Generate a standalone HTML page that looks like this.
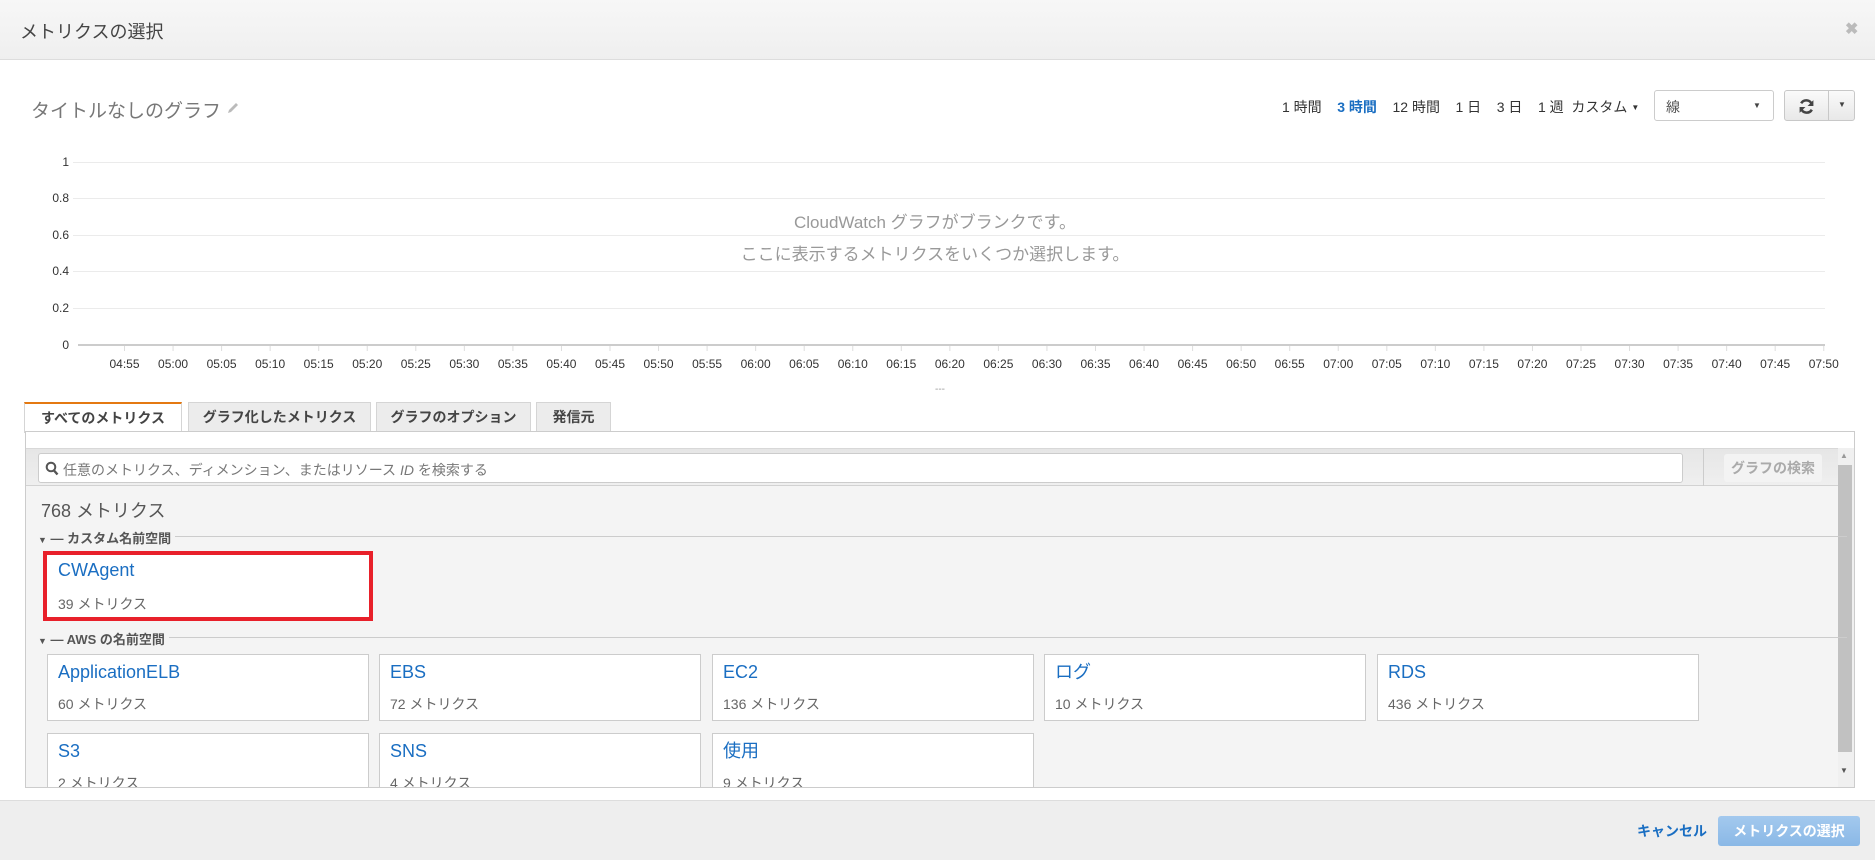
<!DOCTYPE html>
<html><head><meta charset="utf-8"><style>
*{box-sizing:border-box;margin:0;padding:0}
body{width:1875px;height:860px;position:relative;background:#fff;font-family:"Liberation Sans","Noto Sans CJK JP",sans-serif;overflow:hidden;color:#444}
.a{position:absolute;white-space:nowrap}
.hdr{left:0;top:0;width:1875px;height:60px;background:linear-gradient(#f7f7f7,#efefef);border-bottom:1px solid #ddd}
.tab{position:absolute;top:402px;height:30px;background:#ececec;border:1px solid #d5d5d5;border-bottom:none;font-size:14px;font-weight:bold;color:#444;text-align:center;line-height:28px}
.card{position:absolute;width:322px;height:67px;background:#fff;border:1px solid #ccc;overflow:hidden}
.card .t{position:absolute;left:10px;top:6px;font-size:18px;color:#1a6ec2;line-height:22px}
.card .c{position:absolute;left:10px;top:39px;font-size:14px;color:#666}
.sec{position:absolute;left:44px;font-size:13px;font-weight:bold;color:#555;height:16px}
</style></head><body>
<div class="a hdr"></div>
<div class="a" style="left:20px;top:18px;font-size:18px;color:#444">メトリクスの選択</div>
<div class="a" style="left:1845px;top:19px;font-size:16px;color:#bbb;font-weight:bold">✖</div>

<div class="a" style="left:31px;top:96px;font-size:19px;color:#777">タイトルなしのグラフ</div>
<svg class="a" style="left:226px;top:101px" width="14" height="14" viewBox="0 0 14 14"><path d="M2 12 L3 9 L10 2 L12 4 L5 11 Z" fill="#bbb"/></svg>

<div class="a" style="left:1282px;top:97px;font-size:14px;color:#333">1 時間&nbsp;&nbsp;&nbsp; <b style="color:#1a6ec2">3 時間</b>&nbsp;&nbsp;&nbsp; 12 時間&nbsp;&nbsp;&nbsp; 1 日&nbsp;&nbsp;&nbsp; 3 日&nbsp;&nbsp;&nbsp; 1 週&nbsp; カスタム <span style="font-size:8px;vertical-align:2px">▼</span></div>
<div class="a" style="left:1654px;top:90px;width:120px;height:31px;border:1px solid #ccc;border-radius:3px;background:#fff"><span class="a" style="left:11px;top:6px;font-size:14px;color:#555">線</span><span class="a" style="left:98px;top:10px;font-size:8px;color:#444">▼</span></div>
<div class="a" style="left:1784px;top:90px;width:71px;height:31px;border:1px solid #c8c8c8;border-radius:3px;background:linear-gradient(#fafafa,#e8e8e8)">
<svg class="a" style="left:13px;top:7px" width="17" height="17" viewBox="0 0 16 16"><path d="M13 6 A5.5 5.5 0 0 0 3 5" stroke="#444" stroke-width="2.4" fill="none"/><path d="M14.5 2 L14.5 7.5 L9 7.5 Z" fill="#444"/><path d="M3 10 A5.5 5.5 0 0 0 13 11" stroke="#444" stroke-width="2.4" fill="none"/><path d="M1.5 14 L1.5 8.5 L7 8.5 Z" fill="#444"/></svg>
<div class="a" style="left:43px;top:0;width:1px;height:29px;background:#c8c8c8"></div>
<span class="a" style="left:53px;top:9px;font-size:8px;color:#444">▼</span></div>

<svg class="a" style="left:0;top:140px" width="1875" height="260">
<g stroke="#ebebeb" stroke-width="1"><line x1="73" y1="22.5" x2="1825" y2="22.5"/><line x1="73" y1="58.5" x2="1825" y2="58.5"/><line x1="73" y1="95.5" x2="1825" y2="95.5"/><line x1="73" y1="131.5" x2="1825" y2="131.5"/><line x1="73" y1="168.5" x2="1825" y2="168.5"/></g>
<line x1="78" y1="205" x2="1825" y2="205" stroke="#ccc" stroke-width="2"/>
<g font-family="Liberation Sans, sans-serif" font-size="12" fill="#333" text-anchor="end"><text x="69" y="26">1</text><text x="69" y="62">0.8</text><text x="69" y="99">0.6</text><text x="69" y="135">0.4</text><text x="69" y="172">0.2</text><text x="69" y="209">0</text></g>
<g id="xt" font-family="Liberation Sans, sans-serif" font-size="12" fill="#333" text-anchor="middle"></g>
<text x="935" y="88" font-size="17" fill="#999" text-anchor="middle" font-family="Liberation Sans, Noto Sans CJK JP, sans-serif">CloudWatch グラフがブランクです。</text>
<text x="935" y="120" font-size="17" fill="#999" text-anchor="middle" font-family="Liberation Sans, Noto Sans CJK JP, sans-serif">ここに表示するメトリクスをいくつか選択します。</text>
<text x="940" y="252" font-size="10" fill="#999" text-anchor="middle">---</text>
</svg>

<div class="tab" style="left:24px;width:158px;background:#fff;border-top:2px solid #e47911;height:31px;line-height:28px">すべてのメトリクス</div>
<div class="tab" style="left:188px;width:183px">グラフ化したメトリクス</div>
<div class="tab" style="left:376px;width:155px">グラフのオプション</div>
<div class="tab" style="left:536px;width:75px">発信元</div>

<div class="a" style="left:25px;top:431px;width:1830px;height:357px;border:1px solid #ccc;background:#f4f4f4;overflow:hidden">
 <div class="a" style="left:0;top:0;width:1830px;height:16px;background:#fff"></div>
 <div class="a" style="left:0;top:16px;width:1812px;height:38px;background:linear-gradient(#e6e6e6,#efefef);border-top:1px solid #d8d8d8;border-bottom:1px solid #d2d2d2"></div>
 <div class="a" style="left:12px;top:21px;width:1645px;height:30px;background:#fff;border:1px solid #ccc;border-radius:3px">
  <svg class="a" style="left:6px;top:7px" width="14" height="15" viewBox="0 0 14 15"><circle cx="6" cy="6" r="4.3" stroke="#555" stroke-width="2" fill="none"/><line x1="9" y1="9.5" x2="12.5" y2="13.5" stroke="#555" stroke-width="2.4"/></svg>
  <span class="a" style="left:24px;top:6px;font-size:14px;color:#777">任意のメトリクス、ディメンション、またはリソース <i>ID</i> を検索する</span></div>
 <div class="a" style="left:1677px;top:17px;width:1px;height:37px;background:#ccc"></div>
 <div class="a" style="left:1698px;top:22px;width:98px;height:28px;background:#f3f3f3;border-radius:3px;font-size:14px;font-weight:bold;color:#aaa;text-align:center;line-height:28px">グラフの検索</div>
 <div class="a" style="left:1812px;top:16px;width:17px;height:340px;background:#f0f0f0"></div>
 <div class="a" style="left:1812px;top:33px;width:14px;height:287px;background:#c1c1c1"></div>
 <span class="a" style="left:1814px;top:19px;font-size:8px;color:#999">▲</span>
 <span class="a" style="left:1814px;top:334px;font-size:8px;color:#555">▼</span>

 <div class="a" style="left:15px;top:65px;font-size:18px;color:#555">768 メトリクス</div>
 <div class="a" style="left:49px;top:104px;width:1772px;height:1px;background:#ccc"></div>
 <div class="sec" style="left:12px;top:96px;background:#f4f4f4;padding-right:4px"><span style="font-size:9px">▼</span> — カスタム名前空間</div>
 <div class="a" style="left:17px;top:119px;width:330px;height:70px;border:4px solid #e8202a;background:#fff">
  <span class="a" style="left:11px;top:5px;font-size:18px;color:#1a6ec2">CWAgent</span>
  <span class="a" style="left:11px;top:39px;font-size:14px;color:#666">39 メトリクス</span></div>
 <div class="a" style="left:49px;top:205px;width:1772px;height:1px;background:#ccc"></div>
 <div class="sec" style="left:12px;top:197px;background:#f4f4f4;padding-right:4px"><span style="font-size:9px">▼</span> — AWS の名前空間</div>

 <div class="card" style="left:21px;top:222px"><span class="t">ApplicationELB</span><span class="c">60 メトリクス</span></div>
 <div class="card" style="left:353px;top:222px"><span class="t">EBS</span><span class="c">72 メトリクス</span></div>
 <div class="card" style="left:686px;top:222px"><span class="t">EC2</span><span class="c">136 メトリクス</span></div>
 <div class="card" style="left:1018px;top:222px"><span class="t">ログ</span><span class="c">10 メトリクス</span></div>
 <div class="card" style="left:1351px;top:222px"><span class="t">RDS</span><span class="c">436 メトリクス</span></div>
 <div class="card" style="left:21px;top:301px"><span class="t">S3</span><span class="c">2 メトリクス</span></div>
 <div class="card" style="left:353px;top:301px"><span class="t">SNS</span><span class="c">4 メトリクス</span></div>
 <div class="card" style="left:686px;top:301px"><span class="t">使用</span><span class="c">9 メトリクス</span></div>
</div>

<div class="a" style="left:0;top:800px;width:1875px;height:60px;background:#eeeeee;border-top:1px solid #ddd"></div>
<div class="a" style="left:1637px;top:821px;font-size:14px;font-weight:bold;color:#1a6ec2">キャンセル</div>
<div class="a" style="left:1718px;top:816px;width:142px;height:30px;background:linear-gradient(#a3c9ee,#8ab8e6);border-radius:3px;font-size:14px;font-weight:bold;color:#fff;text-align:center;line-height:30px">メトリクスの選択</div>

<script>
var g=document.getElementById('xt'),s='';
for(var i=0;i<36;i++){var m=295+i*5,h=Math.floor(m/60),mm=m%60;var x=124.5+i*48.55;
var lab=('0'+h).slice(-2)+':'+('0'+mm).slice(-2);
s+='<line x1="'+x+'" y1="206" x2="'+x+'" y2="211" stroke="#ddd"/><text x="'+x+'" y="228">'+lab+'</text>';}
g.innerHTML=s;
</script>
</body></html>
